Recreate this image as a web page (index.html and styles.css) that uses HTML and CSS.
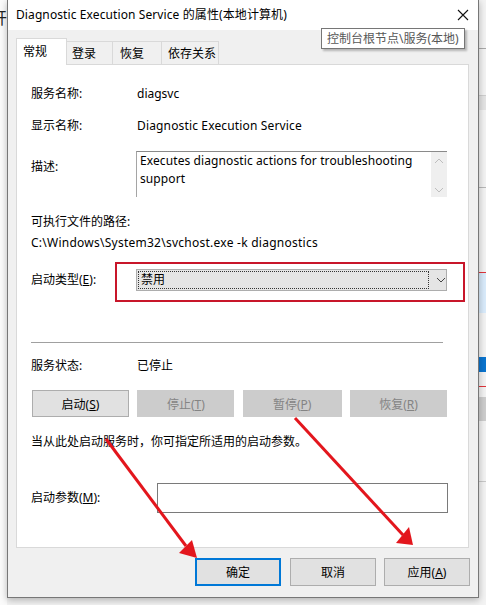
FILE: index.html
```html
<!DOCTYPE html>
<html lang="zh-CN">
<head>
  <meta charset="UTF-8">
  <title>Diagnostic Execution Service 的属性</title>
  <meta name="viewport" content="width=device-width, initial-scale=1.0">
  <link rel="stylesheet" href="styles.css">
</head>
<body>
<div class="screen">

  <!-- ====== Desktop behind the dialog ====== -->
  <div class="desk-left"><span class="desk-glyph">开</span></div>

  <!-- ====== Properties dialog ====== -->
  <div class="dialog">
    <div class="titlebar">
      <span class="title">Diagnostic Execution Service 的属性(本地计算机)</span>
      <svg class="close" width="12" height="12" viewBox="0 0 12 12">
        <path d="M1 1 L11 11 M11 1 L1 11" stroke="#111" stroke-width="1.1" fill="none"/>
      </svg>
    </div>

    <div class="dialog-body">
      <div class="tabs">
        <div class="tab active">常规</div>
        <div class="tab t-logon">登录</div>
        <div class="tab t-recover">恢复</div>
        <div class="tab t-deps">依存关系</div>
      </div>

      <div class="panel">
        <div class="row r-name">
          <span class="label">服务名称:</span>
          <span class="value">diagsvc</span>
        </div>
        <div class="row r-display">
          <span class="label">显示名称:</span>
          <span class="value latin">Diagnostic Execution Service</span>
        </div>
        <div class="row r-desc">
          <span class="label">描述:</span>
          <div class="desc-box">
            <div class="desc-text">Executes diagnostic actions for troubleshooting support</div>
            <div class="desc-scroll">
              <svg width="10" height="6" viewBox="0 0 10 6"><path d="M1 5 L5 1 L9 5" stroke="#bdbdbd" fill="none"/></svg>
              <svg width="10" height="6" viewBox="0 0 10 6"><path d="M1 1 L5 5 L9 1" stroke="#bdbdbd" fill="none"/></svg>
            </div>
          </div>
        </div>
        <div class="row r-path-label">可执行文件的路径:</div>
        <div class="row r-path latin">C:\Windows\System32\svchost.exe -k diagnostics</div>
        <div class="row r-startup">
          <span class="label">启动类型(<u>E</u>):</span>
          <div class="combo">
            <div class="combo-focus">禁用</div>
            <svg class="combo-arrow" width="10" height="6" viewBox="0 0 10 6"><path d="M1 1 L5 5 L9 1" stroke="#444" fill="none"/></svg>
          </div>
        </div>

        <div class="separator"></div>

        <div class="row r-status">
          <span class="label">服务状态:</span>
          <span class="value">已停止</span>
        </div>
        <div class="svc-buttons">
          <button class="btn b-start">启动(<u>S</u>)</button>
          <button class="btn b-stop" disabled>停止(<u>T</u>)</button>
          <button class="btn b-pause" disabled>暂停(<u>P</u>)</button>
          <button class="btn b-resume" disabled>恢复(<u>R</u>)</button>
        </div>
        <div class="row r-hint">当从此处启动服务时，你可指定所适用的启动参数。</div>
        <div class="row r-params">
          <span class="label">启动参数(<u>M</u>):</span>
          <div class="param-input"></div>
        </div>
      </div>

      <div class="actions">
        <button class="btn btn-ok">确定</button>
        <button class="btn btn-cancel">取消</button>
        <button class="btn btn-apply">应用(<u>A</u>)</button>
      </div>
    </div>
  </div>

  <div class="desk-right">
    <div class="dr-a"></div>
    <div class="dr-b"></div>
    <div class="dr-c"></div>
    <div class="dr-d"></div>
    <div class="dr-e"></div>
    <div class="dr-f"></div>
    <div class="dr-g"></div>
    <div class="dr-h"></div>
    <div class="dr-i"></div>
  </div>

  <!-- ====== Tooltip over the dialog ====== -->
  <div class="tooltip">控制台根节点\服务(本地)</div>

  <!-- ====== Red annotations ====== -->
  <svg class="annotations" width="486" height="605" viewBox="0 0 486 605">
    <rect x="116" y="263" width="348" height="38" fill="none" stroke="#c8162a" stroke-width="2"/>
    <line x1="106" y1="439" x2="186" y2="546" stroke="#e3161d" stroke-width="3"/>
    <polygon points="197,558 179,553 192,540" fill="#e3161d"/>
    <line x1="295" y1="418" x2="403" y2="535" stroke="#e3161d" stroke-width="3"/>
    <polygon points="413,545 396,543 409,527" fill="#e3161d"/>
  </svg>
</div>
</body>
</html>
```

FILE: styles.css
```css
/* ====== General Styles ====== */
body {
  margin: 0;
  font-family: "Noto Sans", "Noto Sans CJK SC", sans-serif;
  font-size: 12px;
  color: #000;
  background: #fafafa;
}

.screen {
  position: relative;
  width: 486px;
  height: 605px;
  overflow: hidden;
  display: flex;
  align-items: flex-start;
  background: #f2f2f2;
}

.latin {
  letter-spacing: 0.15px;
}

/* ====== Desktop strips ====== */
.desk-left {
  width: 7px;
  height: 605px;
  overflow: hidden;
  background: #fbfbfb;
  flex-shrink: 0;
}

.desk-glyph {
  display: block;
  margin: 9px 0 0 -9px;
  font-size: 16px;
  line-height: 18px;
  color: #222;
}

.desk-right {
  width: 7px;
  height: 605px;
  flex-shrink: 0;
  background: #f3f3f3;
  overflow: hidden;
}

.dr-a { height: 48px; border-bottom: 1px solid #a9a9a9; }
.dr-b { height: 14px; margin-top: 46px; background: #e4e4e4; border-top: 1px solid #cfcfcf; }
.dr-c { height: 77px; border-bottom: 1px solid #b8b8b8; }
.dr-d { height: 84px; border-bottom: 1px solid #e0353b; background: #f3f3f3; }
.dr-e { height: 40px; background: #d9ebfb; }
.dr-f { height: 15px; margin-top: 44px; background: #0a74cf; }
.dr-g { height: 14px; border-bottom: 1px solid #e0353b; }
.dr-h { height: 24px; margin-top: 10px; background: #cdcdcd; }
.dr-i { height: 60px; border-bottom: 1px solid #c9c9c9; }

/* ====== Dialog frame ====== */
.dialog {
  width: 470px;
  height: 597px;
  flex-shrink: 0;
  background: #f0f0f0;
  border: 1px solid #777;
  border-top: none;
  box-shadow: 0 2px 7px rgba(0,0,0,0.28);
  position: relative;
  z-index: 1;
}

.titlebar {
  height: 30px;
  background: #fff;
  display: flex;
  align-items: center;
  justify-content: space-between;
  padding: 0 9px 0 8px;
}

.title {
  font-size: 12px;
  line-height: 16px;
  padding-bottom: 1px;
  letter-spacing: 0.1px;
}

.close {
  margin-right: 0;
}

.dialog-body {
  padding: 8px 0 10px 0;
}

/* ====== Tabs ====== */
.tabs {
  display: flex;
  align-items: flex-end;
  height: 26px;
  margin-left: 8px;
}

.tab {
  height: 23px;
  box-sizing: border-box;
  border: 1px solid #d9d9d9;
  border-bottom: none;
  background: #f0f0f0;
  padding: 3px 0 0 5px;
  line-height: 18px;
  margin-left: -1px;
}

.tab.active {
  height: 27px;
  margin-left: 0;
  margin-bottom: -1px;
  padding: 4px 0 0 6px;
  width: 51px;
  background: #fff;
  position: relative;
  z-index: 1;
}

.t-logon { width: 47px; }
.t-recover { width: 50px; padding-left: 7px; }
.t-deps { width: 58px; padding-left: 6px; }

/* ====== General tab panel ====== */
.panel {
  margin: 0 9px 0 8px;
  background: #fff;
  border: 1px solid #d9d9d9;
  padding: 0 21px 34px 14px;
}

.row {
  display: flex;
  align-items: center;
  height: 20px;
  line-height: 20px;
  white-space: nowrap;
}

.label {
  width: 106px;
  flex-shrink: 0;
}

.r-name { margin-top: 19px; }
.r-display { margin-top: 12px; }

.r-desc {
  margin-top: 15px;
  height: 46px;
  align-items: flex-start;
}

.r-desc .label {
  padding-top: 6px;
  line-height: 20px;
}

.desc-box {
  flex: 1;
  margin-left: -1px;
  height: 46px;
  box-sizing: border-box;
  border-top: 1px solid #8a8a8a;
  border-left: 1px solid #a5a5a5;
  display: flex;
}

.desc-text {
  flex: 1;
  white-space: normal;
  line-height: 18px;
  padding: 0 3px;
  width: 200px;
  letter-spacing: 0.1px;
}

.desc-scroll {
  width: 16px;
  background: #efefef;
  display: flex;
  flex-direction: column;
  align-items: center;
  justify-content: space-between;
  padding: 6px 0 4px;
  height: 35px;
}

.r-path-label { margin-top: 15px; }

.r-path {
  margin-top: 1px;
  letter-spacing: 0.25px;
}

.r-startup {
  margin-top: 16px;
  height: 22px;
}

.r-startup .label {
  width: 105px;
}

.combo {
  flex: 1;
  height: 22px;
  box-sizing: border-box;
  border: 1px solid #adadad;
  background: #e5e5e5;
  display: flex;
  align-items: center;
}

.combo-focus {
  width: 287px;
  height: 16px;
  line-height: 16px;
  margin-left: 1px;
  padding-left: 2px;
  border: 1px dotted #333;
}

.combo-arrow {
  margin-left: 7px;
}

.separator {
  margin: 51px 4px 0 0;
  height: 1px;
  background: #a0a0a0;
}

.r-status { margin-top: 13px; }

.svc-buttons {
  display: flex;
  justify-content: space-between;
  margin: 14px 0 0 1px;
}

.btn {
  font-family: inherit;
  font-size: 12px;
  height: 27px;
  box-sizing: border-box;
  border: 1px solid #adadad;
  background: #e1e1e1;
  color: #000;
  padding: 0;
}

.btn:disabled {
  background: #cccccc;
  border-color: #cccccc;
  color: #848484;
}

.b-start, .b-stop, .b-resume { width: 97px; }
.b-pause { width: 99px; }

.r-hint { margin-top: 15px; }

.r-params {
  margin-top: 31px;
  height: 30px;
}

.r-params .label {
  width: 126px;
}

.param-input {
  flex: 1;
  height: 30px;
  box-sizing: border-box;
  margin-right: -1px;
  border: 1px solid #7a7a7a;
  background: #fff;
}

/* ====== Bottom buttons ====== */
.actions {
  display: flex;
  justify-content: flex-end;
  gap: 9px;
  margin-top: 10px;
  padding-right: 8px;
}

.actions .btn {
  height: 28px;
  width: 86px;
}

.btn-ok {
  border: 2px solid #0078d7;
}

.btn-apply {
  width: 85px;
  margin-left: -1px;
}

/* ====== Overlays ====== */
.tooltip {
  position: absolute;
  left: 321px;
  top: 28px;
  width: 144px;
  height: 21px;
  box-sizing: border-box;
  padding-left: 5px;
  line-height: 19px;
  background: #fff;
  border: 1px solid #767676;
  color: #575757;
  box-shadow: 2px 2px 2px rgba(0,0,0,0.25);
  z-index: 2;
  white-space: nowrap;
}

.annotations {
  position: absolute;
  left: 0;
  top: 0;
  z-index: 3;
  pointer-events: none;
}
```
